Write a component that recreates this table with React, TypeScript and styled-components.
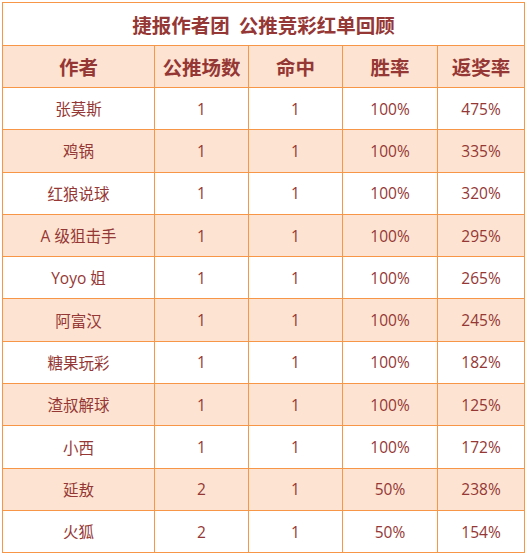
import React from "react";
import styled, { createGlobalStyle } from "styled-components";

const Global = createGlobalStyle`
  html, body { margin: 0; padding: 0; background: #ffffff; }
  body { font-family: "Open Sans", "Noto Sans CJK SC", sans-serif; }
`;

const Page = styled.div`
  padding: 2px 0 0 2px;
`;

const Table = styled.table`
  width: 522px;
  border-collapse: collapse;
  table-layout: fixed;
  border: 1.5px solid #f79646;
`;

const TitleCell = styled.th`
  height: 42px;
  padding: 0;
  border: 1.5px solid #f79646;
  background: #ffffff;
  color: #953735;
  font-family: "Noto Sans CJK SC", sans-serif;
  font-weight: 700;
  font-size: 19.5px;
  text-align: center;
  white-space: pre;
`;

const HeadCell = styled.th`
  height: 41px;
  padding: 0;
  border: 1.5px solid #f79646;
  background: #fde4d2;
  color: #953735;
  font-family: "Noto Sans CJK SC", sans-serif;
  font-weight: 700;
  font-size: 19.5px;
  text-align: center;
`;

const Row = styled.tr<{ $shaded: boolean }>`
  background: ${(p) => (p.$shaded ? "#fde4d2" : "#ffffff")};
`;

const Cell = styled.td`
  height: 41.3px;
  padding: 0;
  border: 1.5px solid #f79646;
  color: #953735;
  font-family: "Open Sans", "Noto Sans CJK SC", sans-serif;
  font-size: 15.5px;
  text-align: center;
`;

const rows: [string, string, string, string, string][] = [
  ["张莫斯", "1", "1", "100%", "475%"],
  ["鸡锅", "1", "1", "100%", "335%"],
  ["红狼说球", "1", "1", "100%", "320%"],
  ["A 级狙击手", "1", "1", "100%", "295%"],
  ["Yoyo 姐", "1", "1", "100%", "265%"],
  ["阿富汉", "1", "1", "100%", "245%"],
  ["糖果玩彩", "1", "1", "100%", "182%"],
  ["渣叔解球", "1", "1", "100%", "125%"],
  ["小西", "1", "1", "100%", "172%"],
  ["延敖", "2", "1", "50%", "238%"],
  ["火狐", "2", "1", "50%", "154%"],
];

const widths = [152, 94, 94, 95, 87];

export default function App() {
  return (
    <Page>
      <Global />
      <Table>
        <colgroup>
          {widths.map((w, i) => (
            <col key={i} style={{ width: w }} />
          ))}
        </colgroup>
        <thead>
          <tr>
            <TitleCell colSpan={5}>{"捷报作者团  公推竞彩红单回顾"}</TitleCell>
          </tr>
          <tr>
            {["作者", "公推场数", "命中", "胜率", "返奖率"].map((h) => (
              <HeadCell key={h}>{h}</HeadCell>
            ))}
          </tr>
        </thead>
        <tbody>
          {rows.map((r, i) => (
            <Row key={i} $shaded={i % 2 === 1}>
              {r.map((c, j) => (
                <Cell key={j}>{c}</Cell>
              ))}
            </Row>
          ))}
        </tbody>
      </Table>
    </Page>
  );
}
